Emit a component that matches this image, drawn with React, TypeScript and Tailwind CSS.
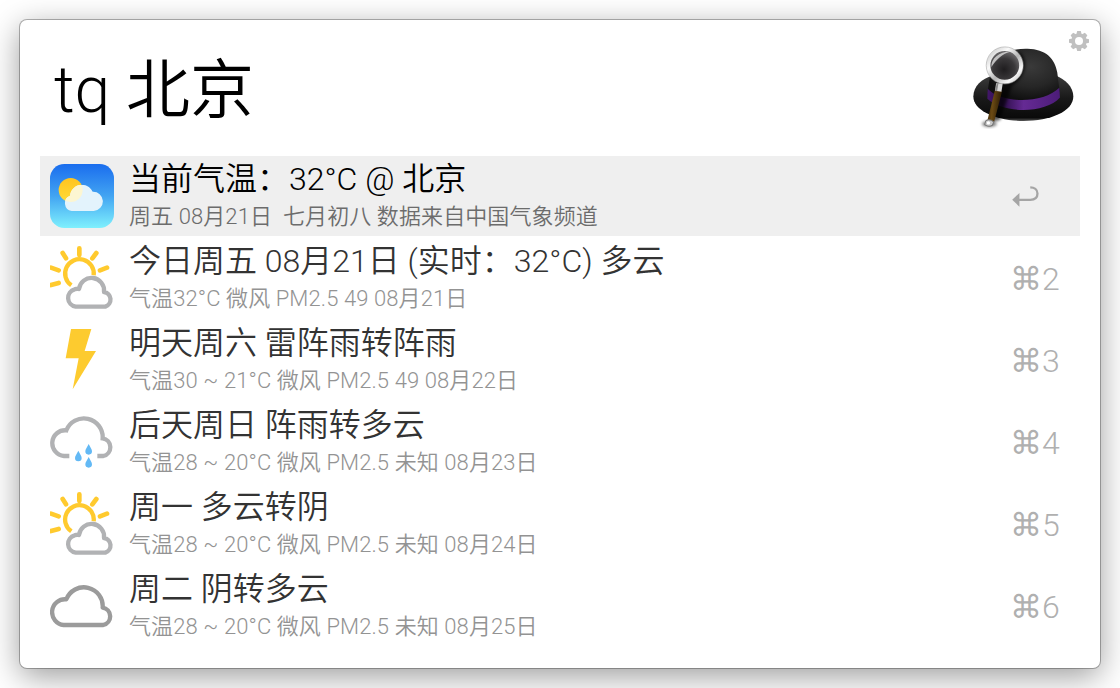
import React from 'react';

function HatLogo() {
  return (
    <svg viewBox="30 70 320 260" className="h-[87px] w-[107px]" aria-hidden="true">
      <defs>
        <radialGradient id="crown" cx="0.6" cy="0.35" r="0.65">
          <stop offset="0" stopColor="#3a3a3a" />
          <stop offset="0.6" stopColor="#262626" />
          <stop offset="1" stopColor="#101010" />
        </radialGradient>
        <linearGradient id="brim" x1="0" y1="0" x2="0" y2="1">
          <stop offset="0" stopColor="#3b3b3b" />
          <stop offset="0.5" stopColor="#191919" />
          <stop offset="0.93" stopColor="#0a0a0a" />
          <stop offset="1" stopColor="#555" />
        </linearGradient>
        <linearGradient id="band" x1="0" y1="0" x2="1" y2="0">
          <stop offset="0" stopColor="#43176b" />
          <stop offset="0.2" stopColor="#2a0d45" />
          <stop offset="0.5" stopColor="#652a94" />
          <stop offset="1" stopColor="#4c1c78" />
        </linearGradient>
        <radialGradient id="lens" cx="0.48" cy="0.62" r="0.6">
          <stop offset="0" stopColor="#1f1d1f" />
          <stop offset="0.55" stopColor="#3a383a" />
          <stop offset="1" stopColor="#777577" />
        </radialGradient>
        <linearGradient id="rim" x1="0" y1="0" x2="1" y2="1">
          <stop offset="0" stopColor="#c5c5c5" />
          <stop offset="0.3" stopColor="#fafafa" />
          <stop offset="0.55" stopColor="#b5b5b5" />
          <stop offset="0.8" stopColor="#f8f8f8" />
          <stop offset="1" stopColor="#b5b5b5" />
        </linearGradient>
        <linearGradient id="handle" x1="0" y1="0" x2="1" y2="0.15">
          <stop offset="0" stopColor="#3a2606" />
          <stop offset="0.4" stopColor="#6b4a14" />
          <stop offset="1" stopColor="#2b1b04" />
        </linearGradient>
        <filter id="soft" x="-30%" y="-30%" width="160%" height="160%">
          <feGaussianBlur stdDeviation="5" />
        </filter>
      </defs>
      <path d="M40 230C40 198 66 177 97 168L285 166C315 179 339 200 339 230C339 275 270 303 190 303C108 303 40 272 40 230Z" fill="url(#brim)" />
      <path d="M83 214C88 180 92 145 112 120C134 95 165 86 202 87C257 88 284 117 291 158L298 214C270 248 112 252 83 214Z" fill="url(#crown)" />
      <path d="M83 207C123 252 250 252 297 204L299 233C257 282 128 282 82 237Z" fill="url(#band)" />
      <path d="M178 96C207 120 198 172 155 199L120 300L92 306L123 190Z" fill="#000" opacity="0.65" filter="url(#soft)" />
      <ellipse cx="88" cy="312" rx="22" ry="9" fill="#000" opacity="0.5" filter="url(#soft)" />
      <path d="M105 210L126 214L102 306L82 302Z" fill="url(#handle)" />
      <path d="M108 190L128 190L124 216L105 213Z" fill="#d8d8d8" />
      <path d="M110 190L115 190L111 214L105 213Z" fill="#888" />
      <path d="M80 301Q90 297 101 306L97 316Q86 323 74 314L77 303Z" fill="#c7c7c7" stroke="#777" strokeWidth="3" />
      <circle cx="85" cy="309" r="5" fill="#fff" />
      <circle cx="134" cy="137" r="49" fill="url(#lens)" stroke="url(#rim)" strokeWidth="12" />
      <circle cx="134" cy="137" r="55.5" fill="none" stroke="#999" strokeWidth="1.5" />
      <path d="M94 142C92 116 118 94 153 95C126 101 107 121 94 142Z" fill="#dedede" opacity="0.8" />
    </svg>
  );
}

function Gear() {
  return (
    <svg viewBox="-10 -10 20 20" className="size-5" aria-hidden="true">
      {[0, 45, 90, 135].map((a) => (
        <path key={a} d="M-2.6 -7L-1.8 -10H1.8L2.6 -7V7L1.8 10H-1.8L-2.6 7Z" fill="#c0c0c0" transform={`rotate(${a})`} />
      ))}
      <circle r="7.6" fill="#c0c0c0" />
      <circle r="4" fill="#fff" />
    </svg>
  );
}

function AppIcon() {
  return (
    <svg viewBox="0 0 192 192" className="size-16" aria-hidden="true">
      <defs>
        <linearGradient id="sky" x1="0" y1="0" x2="0" y2="1">
          <stop offset="0" stopColor="#1a6dee" />
          <stop offset="0.5" stopColor="#42a4f2" />
          <stop offset="1" stopColor="#7ff0fd" />
        </linearGradient>
        <linearGradient id="sun" x1="0" y1="0" x2="0" y2="1">
          <stop offset="0" stopColor="#ffc41f" />
          <stop offset="1" stopColor="#ffdb38" />
        </linearGradient>
        <clipPath id="cloudClip">
          <path d="M65 141A24 24 0 0 1 60 95C62 76 77 62 96 62C111 62 122 71 128 83A29 29 0 0 1 131 141Z" />
        </clipPath>
      </defs>
      <rect width="192" height="192" rx="43" fill="url(#sky)" />
      <circle cx="62" cy="78" r="36" fill="url(#sun)" />
      <g clipPath="url(#cloudClip)">
        <rect width="192" height="192" fill="#e3f3fc" />
        <circle cx="62" cy="78" r="36" fill="#fcf6d2" />
      </g>
    </svg>
  );
}

function SunCloud() {
  return (
    <svg viewBox="0 0 192 192" className="size-16" fill="none" strokeLinecap="round" aria-hidden="true">
      <g stroke="#ffca2e" strokeWidth="14">
        <path d="M88 7V27M38 21L48 37M139 21L127 37M3 65L26 73M171 65L150 73M3 117L26 111" />
        <path d="M64 118A43 43 0 1 1 131 88" strokeWidth="13" strokeLinecap="butt" />
      </g>
      <path d="M77 182A26.6 26.6 0 0 1 74 130Q82 127 87 129A37.4 37.4 0 0 1 162 138A22.7 22.7 0 0 1 166 182Z" stroke="#b1b2b4" strokeWidth="13" strokeLinejoin="round" />
    </svg>
  );
}

function Bolt() {
  return (
    <svg viewBox="0 0 192 192" className="size-16" aria-hidden="true">
      <path d="M63 3H124L104 69H138L68 184L86 91H47Z" fill="#fdcb2f" />
    </svg>
  );
}

function RainCloud() {
  return (
    <svg viewBox="0 0 192 192" className="size-16" fill="none" aria-hidden="true">
      <path d="M58 138H42A38.5 38.5 0 0 1 49 61A56.5 56.5 0 0 1 158 85A27 27 0 0 1 160 138H142" stroke="#b1b2b4" strokeWidth="13" />
      <g fill="#63b9f5">
        <path id="drop" d="M85 122C90 132 95 138 95 144A10 10 0 0 1 75 144C75 138 80 132 85 122Z" />
        <use href="#drop" x="31" y="-20" />
        <use href="#drop" x="31" y="19" />
      </g>
    </svg>
  );
}

function Cloud() {
  return (
    <svg viewBox="0 0 192 192" className="size-16" fill="none" aria-hidden="true">
      <path d="M41 153A38.5 38.5 0 0 1 49 76A56.5 56.5 0 0 1 158 101A26.5 26.5 0 0 1 160 153Z" stroke="#9b9b9b" strokeWidth="13" strokeLinejoin="round" />
    </svg>
  );
}

function ReturnArrow() {
  return (
    <svg viewBox="0 0 81 64" className="ml-px h-[21px] w-[27px]" aria-hidden="true">
      <path d="M0 42L22 21V63Z" fill="#a5a5a5" />
      <path d="M20 42H55C70 42 77 34 77 23C77 10 67 4 55 4" fill="none" stroke="#a5a5a5" strokeWidth="7" />
    </svg>
  );
}

const results = [
  { icon: <AppIcon />, title: '当前气温：32°C @ 北京', sub: '周五 08月21日\u00a0 七月初八 数据来自中国气象频道', key: '' },
  { icon: <SunCloud />, title: '今日周五 08月21日 (实时：32°C) 多云', sub: '气温32°C 微风 PM2.5 49 08月21日', key: '2' },
  { icon: <Bolt />, title: '明天周六 雷阵雨转阵雨', sub: '气温30 ~ 21°C 微风 PM2.5 49 08月22日', key: '3' },
  { icon: <RainCloud />, title: '后天周日 阵雨转多云', sub: '气温28 ~ 20°C 微风 PM2.5 未知 08月23日', key: '4' },
  { icon: <SunCloud />, title: '周一 多云转阴', sub: '气温28 ~ 20°C 微风 PM2.5 未知 08月24日', key: '5' },
  { icon: <Cloud />, title: '周二 阴转多云', sub: '气温28 ~ 20°C 微风 PM2.5 未知 08月25日', key: '6' },
];

export default function App() {
  return (
    <div className="h-[688px] w-[1120px] overflow-hidden bg-white p-5 font-['Roboto','Noto_Sans_CJK_SC',sans-serif] font-[350]">
      <main className="relative flex h-[648px] flex-col rounded-[7px] bg-white px-5 shadow-[0_0_0_1px_rgba(0,0,0,0.28),0_8px_32px_rgba(0,0,0,0.4)]">
        <header className="flex h-[136px] items-start justify-between pl-[14px]">
          <h1 className="mt-[23px] whitespace-pre text-[64px] leading-[96px] text-black">tq 北京</h1>
          <div className="mt-[23px] mr-[3px]">
            <HatLogo />
          </div>
          <button className="absolute top-[11px] right-[11px]" aria-label="设置">
            <Gear />
          </button>
        </header>
        <ul className="flex flex-col gap-0.5">
          {results.map((r, i) => (
            <li key={r.title} className={`flex h-20 items-center px-[10px] ${i === 0 ? 'bg-[#efefef]' : ''}`}>
              {r.icon}
              <div className="ml-[15px] flex-1 pb-[2px] whitespace-pre">
                <div className={`text-[32px] leading-[44px] ${i === 0 ? 'text-black' : 'text-[#333]'}`}>{r.title}</div>
                <div className={`text-[22px] leading-[32px] tracking-[0.1px] ${i === 0 ? 'text-[#6c6c6c]' : 'text-[#939393]'}`}>{r.sub}</div>
              </div>
              <div className="flex w-[59px] items-center text-[32px] text-[#b0b0b0]">
                {r.key ? (
                  <span className="-ml-px pt-[2px] leading-[40px] whitespace-pre">
                    <span className="font-['DejaVu_Sans']">⌘</span>
                    {r.key}
                  </span>
                ) : (
                  <ReturnArrow />
                )}
              </div>
            </li>
          ))}
        </ul>
      </main>
    </div>
  );
}
